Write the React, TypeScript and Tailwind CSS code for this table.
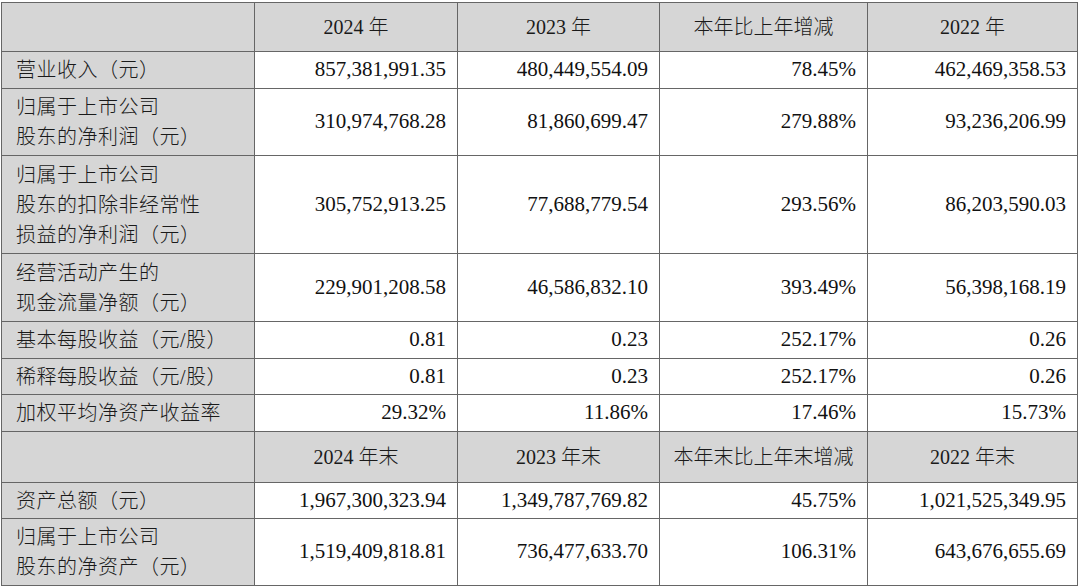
const cjk = { fontFamily: '"Liberation Serif", "Noto Sans CJK SC", serif' };

type Row = { label: string[]; values: string[]; h: string };

const topRows: Row[] = [
  { label: ['营业收入（元）'], values: ['857,381,991.35', '480,449,554.09', '78.45%', '462,469,358.53'], h: 'h-[37px]' },
  { label: ['归属于上市公司', '股东的净利润（元）'], values: ['310,974,768.28', '81,860,699.47', '279.88%', '93,236,206.99'], h: 'h-[67px]' },
  { label: ['归属于上市公司', '股东的扣除非经常性', '损益的净利润（元）'], values: ['305,752,913.25', '77,688,779.54', '293.56%', '86,203,590.03'], h: 'h-[98px]' },
  { label: ['经营活动产生的', '现金流量净额（元）'], values: ['229,901,208.58', '46,586,832.10', '393.49%', '56,398,168.19'], h: 'h-[68px]' },
  { label: ['基本每股收益（元/股）'], values: ['0.81', '0.23', '252.17%', '0.26'], h: 'h-[37px]' },
  { label: ['稀释每股收益（元/股）'], values: ['0.81', '0.23', '252.17%', '0.26'], h: 'h-[36px]' },
  { label: ['加权平均净资产收益率'], values: ['29.32%', '11.86%', '17.46%', '15.73%'], h: 'h-[37px]' },
];

const bottomRows: Row[] = [
  { label: ['资产总额（元）'], values: ['1,967,300,323.94', '1,349,787,769.82', '45.75%', '1,021,525,349.95'], h: 'h-[36px]' },
  { label: ['归属于上市公司', '股东的净资产（元）'], values: ['1,519,409,818.81', '736,477,633.70', '106.31%', '643,676,655.69'], h: 'h-[67px]' },
];

function HeaderRow({ cols, h }: { cols: string[]; h: string }) {
  return (
    <tr className={`${h} bg-[#d6d6d6]`}>
      <td className="border border-[#666]"></td>
      {cols.map((c) => (
        <td key={c} className="border border-[#666] text-center text-[20px] font-light text-[#1a1a1a]">
          {c}
        </td>
      ))}
    </tr>
  );
}

function DataRow({ row }: { row: Row }) {
  return (
    <tr className={row.h}>
      <td className="border border-[#666] bg-[#d6d6d6] pl-[14px] text-[20px] font-light leading-[30px] tracking-[0.5px] text-[#1a1a1a]">
        {row.label.map((l) => (
          <div key={l}>{l}</div>
        ))}
      </td>
      {row.values.map((v, i) => (
        <td key={i} className="border border-[#666] bg-white pr-[11px] text-right text-[21px] text-[#111]">
          {v}
        </td>
      ))}
    </tr>
  );
}

export default function App() {
  return (
    <div className="h-[587px] w-[1080px] bg-white pl-[1px] pt-[2px]" style={cjk}>
      <table className="w-[1076px] table-fixed border-collapse">
        <colgroup>
          <col className="w-[253px]" />
          <col className="w-[203px]" />
          <col className="w-[202px]" />
          <col className="w-[208px]" />
          <col className="w-[210px]" />
        </colgroup>
        <tbody>
          <HeaderRow cols={['2024 年', '2023 年', '本年比上年增减', '2022 年']} h="h-[49px]" />
          {topRows.map((r) => (
            <DataRow key={r.label.join('')} row={r} />
          ))}
          <HeaderRow cols={['2024 年末', '2023 年末', '本年末比上年末增减', '2022 年末']} h="h-[51px]" />
          {bottomRows.map((r) => (
            <DataRow key={r.label.join('')} row={r} />
          ))}
        </tbody>
      </table>
    </div>
  );
}
